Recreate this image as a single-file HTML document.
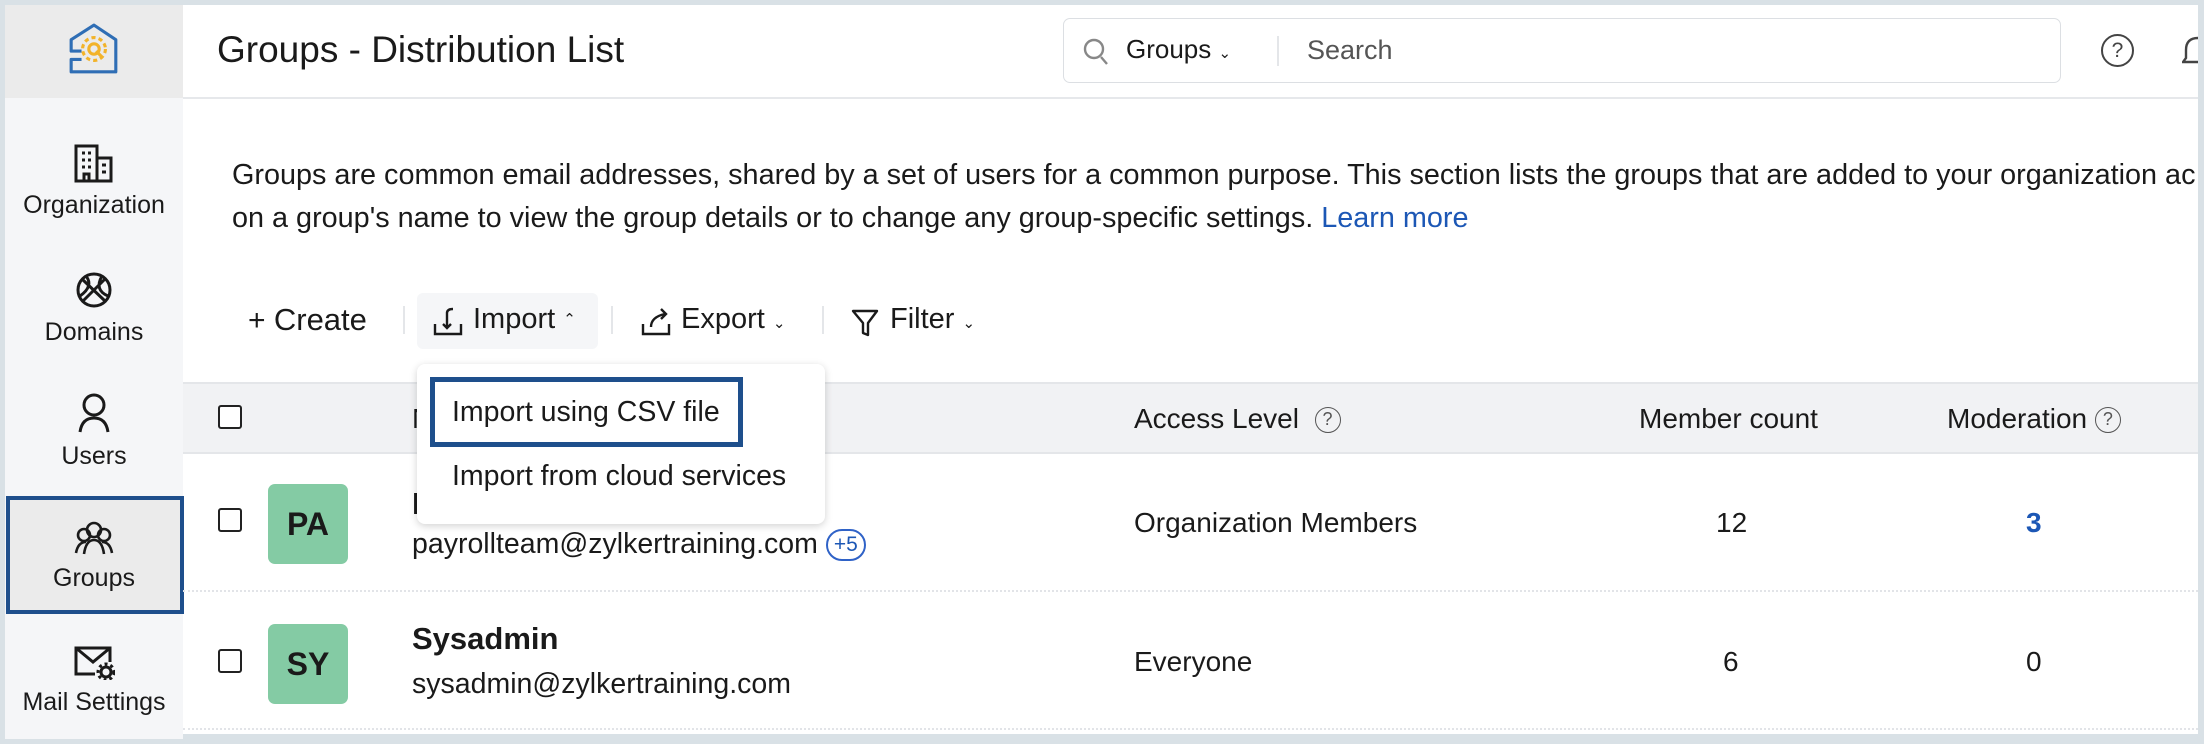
<!DOCTYPE html>
<html><head><meta charset="utf-8"><style>
*{box-sizing:border-box;margin:0;padding:0}
body{width:2204px;height:744px;overflow:hidden;background:#d9e1e6;font-family:"Liberation Sans",Arial,sans-serif;color:#1a1a1a;position:relative}
.abs{position:absolute}
#side{left:5px;top:5px;width:178px;height:734px;background:#f5f6f8}
#logo{left:5px;top:5px;width:178px;height:93px;background:#ebebeb}
#main{left:183px;top:5px;width:2015px;height:729px;background:#fff}
.nav{position:absolute;left:5px;width:178px;text-align:center;font-size:25px;color:#1a1a1a}
.nav svg{display:block;margin:0 auto 8px}
.t{position:absolute;white-space:nowrap}
.cb{position:absolute;width:24px;height:24px;border:2px solid #222;border-radius:3px;background:#fff}
.av{position:absolute;width:80px;height:80px;background:#84cba4;border-radius:7px;font-weight:bold;font-size:32px;text-align:center;line-height:80px;color:#1a1a1a}
.dot{position:absolute;left:183px;width:2015px;height:0;border-top:2px dotted #e2e4e8}
.q{display:inline-block;width:26px;height:26px;border:1.5px solid #555;border-radius:50%;font-size:18px;line-height:23px;text-align:center;color:#555;vertical-align:3px}
</style></head><body>
<div class="abs" id="side"></div>
<div class="abs" id="logo"></div>
<svg class="abs" style="left:67px;top:22px" width="54" height="54" viewBox="0 0 52 52"><path d="M14 28 L4 28 L4 17 L26 3 L47 17 L47 48 L4 48 L4 36 L14 36" fill="none" stroke="#2f6eb5" stroke-width="3" stroke-linejoin="round"/><circle cx="26" cy="26" r="11" fill="none" stroke="#f2b32a" stroke-width="3" stroke-dasharray="4 3"/><circle cx="26" cy="26" r="5" fill="none" stroke="#f2b32a" stroke-width="3"/><path d="M28 28 L33 33" stroke="#f2b32a" stroke-width="3"/></svg>
<div class="abs" id="main"></div>
<div class="abs" style="left:183px;top:97px;width:2015px;height:2px;background:#e6e8eb"></div>

<div class="nav" style="top:143px"><svg width="42" height="40" viewBox="0 0 42 40" fill="none" stroke="#1a1a1a" stroke-width="3"><path d="M3 38 V3 H24 V38 Z M24 15 H38 V38 H24"/><path d="M9 10h3M15 10h3M9 17h3M15 17h3M9 24h3M15 24h3M29 22h4M29 29h4M11 38v-7h5v7"/></svg>Organization</div>
<div class="nav" style="top:270px"><svg width="40" height="40" viewBox="0 0 40 40" fill="none" stroke="#1a1a1a" stroke-width="3"><circle cx="20" cy="20" r="16"/><path d="M8 9 L31 31 M31 9 L9 31 M12 6 Q20 16 6 26 M28 6 Q20 20 34 26"/></svg>Domains</div>
<div class="nav" style="top:392px"><svg width="36" height="42" viewBox="0 0 36 42" fill="none" stroke="#1a1a1a" stroke-width="3"><circle cx="18" cy="13" r="10"/><path d="M4 40 Q6 26 18 26 Q30 26 32 40"/></svg>Users</div>
<div class="abs" style="left:6px;top:496px;width:178px;height:118px;background:#ebebeb;border:4px solid #1e4f8c"></div>
<div class="nav" style="top:520px"><svg width="40" height="36" viewBox="0 0 40 36" fill="none" stroke="#1a1a1a" stroke-width="2.6"><circle cx="20" cy="10" r="7"/><circle cx="10" cy="15" r="6"/><circle cx="30" cy="15" r="6"/><path d="M2 33 Q4 22 12 22 M38 33 Q36 22 28 22 M10 34 Q12 20 20 20 Q28 20 30 34"/></svg>Groups</div>
<div class="nav" style="top:644px"><svg width="42" height="36" viewBox="0 0 42 36" fill="none" stroke="#1a1a1a" stroke-width="3"><path d="M22 30 H3 V4 H37 V18 M3 4 L20 18 L37 4"/><circle cx="33" cy="28" r="5"/><circle cx="33" cy="28" r="8" stroke-dasharray="3 3"/></svg>Mail Settings</div>

<div class="t" style="left:217px;top:29px;font-size:37px;color:#1a1a1a">Groups - Distribution List</div>
<div class="abs" style="left:1063px;top:18px;width:998px;height:65px;border:1.5px solid #dcdfe3;border-radius:7px"></div>
<svg class="abs" style="left:1083px;top:38px" width="26" height="28" viewBox="0 0 26 28" fill="none" stroke="#888" stroke-width="2.4"><circle cx="11" cy="11" r="9"/><path d="M18 19 L24 26"/></svg>
<div class="t" style="left:1126px;top:34px;font-size:26px">Groups <span style="font-size:15px">&#8964;</span></div>
<div class="abs" style="left:1277px;top:36px;width:2px;height:30px;background:#e4e6e9"></div>
<div class="t" style="left:1307px;top:35px;font-size:27px;color:#555">Search</div>
<div class="abs" style="left:2101px;top:34px;width:33px;height:33px;border:2px solid #444;border-radius:50%;text-align:center;font-size:21px;line-height:29px;color:#444">?</div>
<svg class="abs" style="left:2182px;top:32px" width="16" height="36" viewBox="0 0 16 36" fill="none" stroke="#444" stroke-width="2.4"><path d="M16 6 Q4 6 4 18 V26 L1 30 H16"/></svg>

<div class="t" style="left:232px;top:154px;font-size:28.8px;line-height:43px;color:#1a1a1a">Groups are common email addresses, shared by a set of users for a common purpose. This section lists the groups that are added to your organization ac<br>on a group's name to view the group details or to change any group-specific settings. <span style="color:#1c57b5">Learn more</span></div>

<div class="t" style="left:248px;top:302px;font-size:30px">+ <span style="font-size:31px">Create</span></div>
<div class="abs" style="left:403px;top:306px;width:2px;height:28px;background:#e4e6e9"></div>
<div class="abs" style="left:417px;top:293px;width:181px;height:56px;background:#f5f6f8;border-radius:6px"></div>
<svg class="abs" style="left:433px;top:307px" width="30" height="30" viewBox="0 0 30 30" fill="none" stroke="#1a1a1a" stroke-width="2.4"><path d="M2 17 V27 H28 V17 M14 21 V6 Q14 2 20 2 M10 17 L14 21 L18 17"/></svg>
<div class="t" style="left:473px;top:303px;font-size:29px">Import <span style="font-size:15px;vertical-align:4px">&#8963;</span></div>
<div class="abs" style="left:611px;top:306px;width:2px;height:28px;background:#e4e6e9"></div>
<svg class="abs" style="left:641px;top:307px" width="30" height="30" viewBox="0 0 30 30" fill="none" stroke="#1a1a1a" stroke-width="2.4"><path d="M2 17 V27 H28 V17 M10 20 Q10 10 24 7 M20 2 L25 7 L20 12"/></svg>
<div class="t" style="left:681px;top:303px;font-size:29px">Export <span style="font-size:15px">&#8964;</span></div>
<div class="abs" style="left:822px;top:306px;width:2px;height:28px;background:#e4e6e9"></div>
<svg class="abs" style="left:851px;top:308px" width="28" height="30" viewBox="0 0 28 30" fill="none" stroke="#1a1a1a" stroke-width="2.4" stroke-linejoin="round"><path d="M2 3 H26 L17 15 V27 L12 25 V15 Z"/></svg>
<div class="t" style="left:890px;top:303px;font-size:29px">Filter <span style="font-size:15px">&#8964;</span></div>

<div class="abs" style="left:183px;top:382px;width:2015px;height:72px;background:#f1f2f4;border-top:2px solid #e4e6e9;border-bottom:2px solid #e4e6e9"></div>
<div class="cb" style="left:218px;top:405px"></div>
<div class="t" style="left:412px;top:403px;font-size:28px">N</div>
<div class="t" style="left:1134px;top:403px;font-size:28px">Access Level &nbsp;<span class="q">?</span></div>
<div class="t" style="left:1639px;top:403px;font-size:28px">Member count</div>
<div class="t" style="left:1947px;top:403px;font-size:28px">Moderation <span class="q">?</span></div>

<div class="cb" style="left:218px;top:508px"></div>
<div class="av" style="left:268px;top:484px">PA</div>
<div class="t" style="left:412px;top:486px;font-size:31px;font-weight:bold">Payroll Team</div>
<div class="t" style="left:412px;top:528px;font-size:28.5px">payrollteam@zylkertraining.com <span style="display:inline-block;border:2px solid #2f62c7;border-radius:16px;color:#1c57b5;font-size:21px;padding:2px 6px;vertical-align:2px">+5</span></div>
<div class="t" style="left:1134px;top:507px;font-size:28px">Organization Members</div>
<div class="t" style="left:1716px;top:507px;font-size:28px">12</div>
<div class="t" style="left:2026px;top:507px;font-size:28px;font-weight:bold;color:#1c57b5">3</div>
<div class="dot" style="top:590px"></div>

<div class="cb" style="left:218px;top:649px"></div>
<div class="av" style="left:268px;top:624px">SY</div>
<div class="t" style="left:412px;top:621px;font-size:31px;font-weight:bold">Sysadmin</div>
<div class="t" style="left:412px;top:668px;font-size:28.5px">sysadmin@zylkertraining.com</div>
<div class="t" style="left:1134px;top:646px;font-size:28px">Everyone</div>
<div class="t" style="left:1723px;top:646px;font-size:28px">6</div>
<div class="t" style="left:2026px;top:646px;font-size:28px">0</div>
<div class="dot" style="top:728px"></div>

<div class="abs" style="left:417px;top:364px;width:408px;height:160px;background:#fff;border-radius:8px;box-shadow:0 2px 8px rgba(0,0,0,.18)"></div>
<div class="abs" style="left:430px;top:377px;width:313px;height:70px;border:5px solid #1e4f8c"></div>
<div class="t" style="left:452px;top:396px;font-size:28.5px">Import using CSV file</div>
<div class="t" style="left:452px;top:460px;font-size:28.5px">Import from cloud services</div>
</body></html>
